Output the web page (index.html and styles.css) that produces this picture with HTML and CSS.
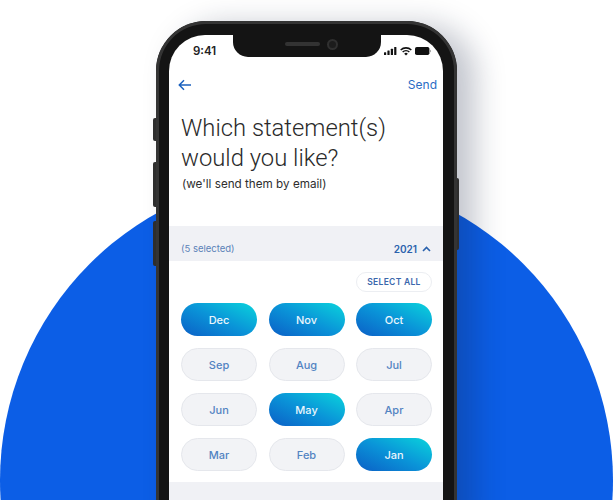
FILE: index.html
```html
<!DOCTYPE html>
<html lang="en">
<head>
<meta charset="utf-8">
<title>Statements</title>
<link rel="stylesheet" href="styles.css">
</head>
<body>
<main class="stage">
  <div class="circle"></div>
  <div class="phone">
    <span class="side mute"></span>
    <span class="side vol-up"></span>
    <span class="side vol-down"></span>
    <span class="side power"></span>
    <div class="screen">
      <div class="notch">
        <span class="speaker"></span>
        <span class="camera"></span>
      </div>
      <div class="status">
        <span class="time">9:41</span>
        <span class="status-icons">
          <svg class="signal" width="13" height="8" viewBox="0 0 13 8"><rect x="0" y="5.2" width="2.2" height="2.8" rx=".5"/><rect x="3.4" y="3.6" width="2.2" height="4.4" rx=".5"/><rect x="6.8" y="1.8" width="2.2" height="6.2" rx=".5"/><rect x="10.2" y="0" width="2.2" height="8" rx=".5"/></svg>
          <svg class="wifi" width="12" height="9" viewBox="0 0 14 10"><path d="M7 9.8 4.9 7.5a3 3 0 0 1 4.2 0Z"/><path d="M3.7 6.3 2.5 5a6.5 6.5 0 0 1 9 0l-1.2 1.3a4.7 4.7 0 0 0-6.6 0Z"/><path d="M1.4 3.9 .2 2.6a9.9 9.9 0 0 1 13.6 0l-1.2 1.3a8.1 8.1 0 0 0-11.2 0Z"/></svg>
          <svg class="battery" width="16" height="8" viewBox="0 0 16 8"><rect x="0" y="0" width="14.4" height="8" rx="1.8"/><rect x="14.9" y="2.8" width="1" height="2.4" rx=".4" fill="#a0a0a0"/></svg>
        </span>
      </div>
      <div class="nav">
        <svg class="back" width="14" height="12" viewBox="0 0 14 12"><path d="M13 6H1.5M6 1.3 1.3 6 6 10.7"/></svg>
        <span class="send">Send</span>
      </div>
      <h1 class="title">Which statement(s)<br>would you like?</h1>
      <p class="sub">(we'll send them by email)</p>
      <div class="band">
        <span class="selected">(5 selected)</span>
        <span class="year">2021
          <svg width="9" height="6" viewBox="0 0 9 6"><path d="M1 5 4.5 1.5 8 5"/></svg>
        </span>
      </div>
      <div class="actions"><span class="select-all">SELECT ALL</span></div>
      <div class="months">
        <span class="pill on">Dec</span>
        <span class="pill on">Nov</span>
        <span class="pill on">Oct</span>
        <span class="pill">Sep</span>
        <span class="pill">Aug</span>
        <span class="pill">Jul</span>
        <span class="pill">Jun</span>
        <span class="pill on">May</span>
        <span class="pill">Apr</span>
        <span class="pill">Mar</span>
        <span class="pill">Feb</span>
        <span class="pill on">Jan</span>
      </div>
      <div class="foot"></div>
    </div>
  </div>
</main>
</body>
</html>
```
FILE: styles.css
```css
* { box-sizing: border-box; }
html, body { margin: 0; height: 100%; background: #fff; overflow: hidden; }
body { font-family: Inter, "Liberation Sans", sans-serif; }
.stage { position: relative; width: 613px; height: 500px; overflow: hidden; }
.circle {
  position: absolute; left: 0; top: 174px; width: 613px; height: 613px;
  border-radius: 50%; background: #0c5ee6;
}
.phone {
  position: relative; width: 301px; height: 540px; margin-left: 156px; top: 21px;
  background: #141414; border-radius: 50px; padding: 14px 14px 0 13px;
  box-shadow: inset 0 0 0 3px #343434, 18px 4px 30px rgba(20,30,60,.26);
}
.side { position: absolute; background: #2e2e2e; }
.mute { left: -3px; top: 97px; width: 3px; height: 23px; border-radius: 2px 0 0 2px; }
.vol-up { left: -3px; top: 141px; width: 3px; height: 45px; border-radius: 2px 0 0 2px; }
.vol-down { left: -3px; top: 200px; width: 3px; height: 45px; border-radius: 2px 0 0 2px; }
.power { right: -2px; top: 157px; width: 2px; height: 72px; border-radius: 0 2px 2px 0; }
.screen {
  position: relative; height: 526px; background: #fff; border-radius: 36px 36px 0 0;
  overflow: hidden; color: #1f1f1f;
}
.notch {
  position: absolute; left: 64px; top: 0; width: 148px; height: 22px;
  background: #141414; border-radius: 0 0 15px 15px;
  display: flex; align-items: center; justify-content: center; gap: 7px; padding: 0 0 4px 8px;
}
.speaker { width: 35px; height: 4px; border-radius: 2px; background: #333; }
.camera { width: 11px; height: 11px; border-radius: 50%; background: #1c1c1c; border: 2px solid #303030; }
.status { display: flex; justify-content: space-between; align-items: center; height: 32px; padding: 0 0 0 24px; }
.time { font-size: 11.5px; font-weight: 600; color: #222; }
.status-icons { display: flex; align-items: center; gap: 3px; margin-right: 12px; fill: #111; }
.nav { display: flex; justify-content: space-between; align-items: center; height: 35px; padding: 0 6px 0 9px; }
.back { fill: none; stroke: #1c62bf; stroke-width: 1.5; }
.send { font-size: 12px; color: #2a6cc4; }
.title { margin: 11px 0 0 12px; font-size: 23.8px; line-height: 30px; font-weight: 300; color: #2a2a2a; font-family: Roboto, sans-serif; }
.sub { margin: 4px 0 0 13px; font-size: 11.7px; line-height: 14px; font-weight: 400; color: #2e2e2e; }
.band {
  display: flex; justify-content: space-between; align-items: center;
  height: 35px; margin-top: 35px; padding: 10px 12px 0 12px; background: #f0f1f5;
}
.selected { font-size: 9.5px; color: #5b82b8; }
.year { display: flex; align-items: center; gap: 5px; font-size: 10px; font-weight: 600; color: #2a62ad; }
.year svg { fill: none; stroke: #2a62ad; stroke-width: 1.6; }
.actions { display: flex; justify-content: flex-end; padding: 11px 11px 0 0; }
.select-all {
  display: flex; align-items: center; justify-content: center; width: 76px; height: 20px;
  border: 1px solid #eceef2; border-radius: 10px; background: #fff;
  font-size: 8.5px; font-weight: 600; letter-spacing: .3px; color: #3a67ac;
}
.months { display: grid; grid-template-columns: repeat(3, 76px); column-gap: 11.5px; row-gap: 12px; margin: 11px 0 0 12px; }
.pill {
  display: flex; align-items: center; justify-content: center; height: 33px; border-radius: 17px;
  border: 1px solid #e5e7ec; background: #f2f3f6; font-size: 11px; font-weight: 500; color: #5283c2;
}
.pill.on { border: 0; background: linear-gradient(205deg, #0ad4dc 0%, #0a94d8 50%, #0b5fc6 100%); color: #eaf6fc; font-weight: 500; }
.foot { height: 60px; margin-top: 11px; background: #f0f1f5; }
```
